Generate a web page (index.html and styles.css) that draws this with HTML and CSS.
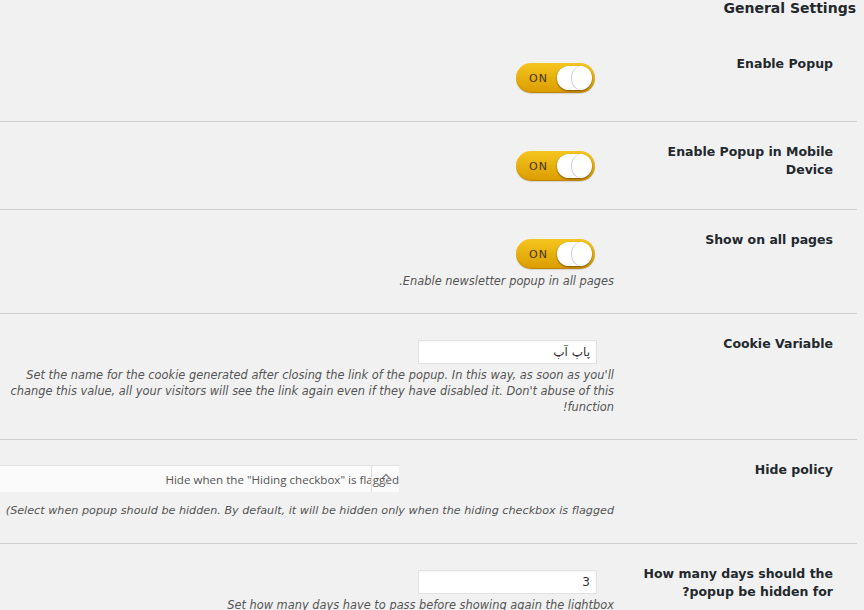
FILE: index.html
```html
<!DOCTYPE html>
<html dir="rtl">
<head>
<meta charset="utf-8">
<link rel="stylesheet" href="styles.css">
</head>
<body>
<div class="wrap">
  <h2 class="title">General Settings</h2>

  <div class="row">
    <div class="label">Enable Popup</div>
    <div class="field">
      <div class="toggle"><span class="knob"><i></i><i></i></span><span class="on">ON</span></div>
    </div>
  </div>

  <div class="row">
    <div class="label">Enable Popup in Mobile Device</div>
    <div class="field">
      <div class="toggle"><span class="knob"><i></i><i></i></span><span class="on">ON</span></div>
    </div>
  </div>

  <div class="row">
    <div class="label">Show on all pages</div>
    <div class="field">
      <div class="toggle"><span class="knob"><i></i><i></i></span><span class="on">ON</span></div>
      <p class="desc">Enable newsletter popup in all pages.</p>
    </div>
  </div>

  <div class="row">
    <div class="label">Cookie Variable</div>
    <div class="field">
      <input class="text" type="text" value="پاپ آپ">
      <p class="desc">Set the name for the cookie generated after closing the link of the popup. In this way, as soon as you'll change this value, all your visitors will see the link again even if they have disabled it. Don't abuse of this function!</p>
    </div>
  </div>

  <div class="row">
    <div class="label">Hide policy</div>
    <div class="field">
      <div class="select">
        <span class="sel-text">Hide when the "Hiding checkbox" is flagged</span>
        <span class="sel-arrow"><svg width="12" height="14" viewBox="0 0 12 14"><path d="M2.5 6 L6 2.5 L9.5 6" fill="none" stroke="#888" stroke-width="1.5"/><path d="M3 9 L6 11.5 L9 9" fill="none" stroke="#bbb" stroke-width="1.1"/></svg></span>
      </div>
      <p class="desc nowrap">Select when popup should be hidden. By default, it will be hidden only when the hiding checkbox is flagged)</p>
    </div>
  </div>

  <div class="row last">
    <div class="label">How many days should the popup be hidden for?</div>
    <div class="field">
      <input class="text" type="text" value="3">
      <p class="desc">Set how many days have to pass before showing again the lightbox</p>
    </div>
  </div>
</div>
</body>
</html>
```

FILE: styles.css
```css
html, body {
  margin: 0;
  padding: 0;
  background: #f1f1f1;
  overflow: hidden;
}
body {
  font-family: "DejaVu Sans", Verdana, sans-serif;
  color: #23282d;
  width: 864px;
  height: 610px;
}
.wrap {
  margin-right: 7px;
}
.title {
  margin: 0;
  height: 34px;
  font-size: 14px;
  line-height: 16px;
  font-weight: bold;
  color: #23282d;
  padding-right: 1px;
}
.row {
  display: grid;
  grid-template-columns: 243px 1fr;
  border-bottom: 1px solid #cfcfcf;
}
.row.last {
  border-bottom: none;
}
.label {
  padding: 21px 24px 0 14px;
  font-size: 12.5px;
  line-height: 18px;
  font-weight: bold;
}
.field {
  padding: 26px 0 24px 0;
  min-width: 0;
}
.toggle {
  margin: 3px 19px 4px 0;
  width: 79px;
  height: 30px;
  box-sizing: border-box;
  border-radius: 15px;
  background: linear-gradient(#f4c51e, #dc9c00);
  box-shadow: inset 0 -1px 1px rgba(150, 90, 0, 0.35), 0 1px 1px rgba(0,0,0,0.12);
  display: flex;
  direction: ltr;
  flex-direction: row-reverse;
  align-items: center;
  justify-content: space-between;
  padding: 0 3px 0 13px;
}
.on {
  font-size: 11px;
  letter-spacing: 1px;
  color: #4a3300;
  font-family: "DejaVu Sans", sans-serif;
}
.knob {
  display: flex;
  direction: ltr;
  width: 35px;
  height: 24px;
  border-radius: 12px;
  background: #fff;
  box-shadow: 0 1px 2px rgba(0,0,0,0.5);
  overflow: hidden;
}
.knob i {
  display: block;
  width: 20px;
  height: 24px;
  border-radius: 50%;
  background: radial-gradient(ellipse at 45% 40%, #ffffff 60%, #dadada 100%);
  flex: none;
}
.knob i + i {
  margin-left: -5px;
  box-shadow: -1px 0 1px rgba(0,0,0,0.25);
}
.desc {
  margin: 3px 0 0 0;
  font-size: 11.4px;
  line-height: 16px;
  font-style: italic;
  color: #555;
  padding: 0 0 0 4px;
}
.toggle + .desc {
  margin-top: 0;
}
.desc.nowrap {
  white-space: nowrap;
  padding: 0;
  margin-top: 0;
  font-size: 11.2px;
}
.text {
  display: block;
  margin: 0 17px 0 0;
  width: 179px;
  height: 24px;
  box-sizing: border-box;
  border: 1px solid #e2e2e2;
  background: #fff;
  font-family: "DejaVu Sans", sans-serif;
  font-size: 12px;
  color: #333;
  padding: 0 6px;
  box-shadow: inset 0 1px 2px rgba(0,0,0,0.04);
  outline: none;
}
.select {
  margin: -1px 215px 11px 0;
  width: 420px;
  height: 27px;
  box-sizing: border-box;
  background: #fbfbfb;
  border-top: 1px solid #e0e0e0;
  position: relative;
  display: flex;
  align-items: center;
  font-family: "Open Sans", sans-serif;
  font-size: 11.6px;
  color: #555;
  white-space: nowrap;
}
.sel-arrow {
  position: absolute;
  right: 0;
  top: 0;
  width: 27px;
  height: 26px;
  border-left: 1px solid #ddd;
  display: flex;
  align-items: center;
  justify-content: center;
}
```
